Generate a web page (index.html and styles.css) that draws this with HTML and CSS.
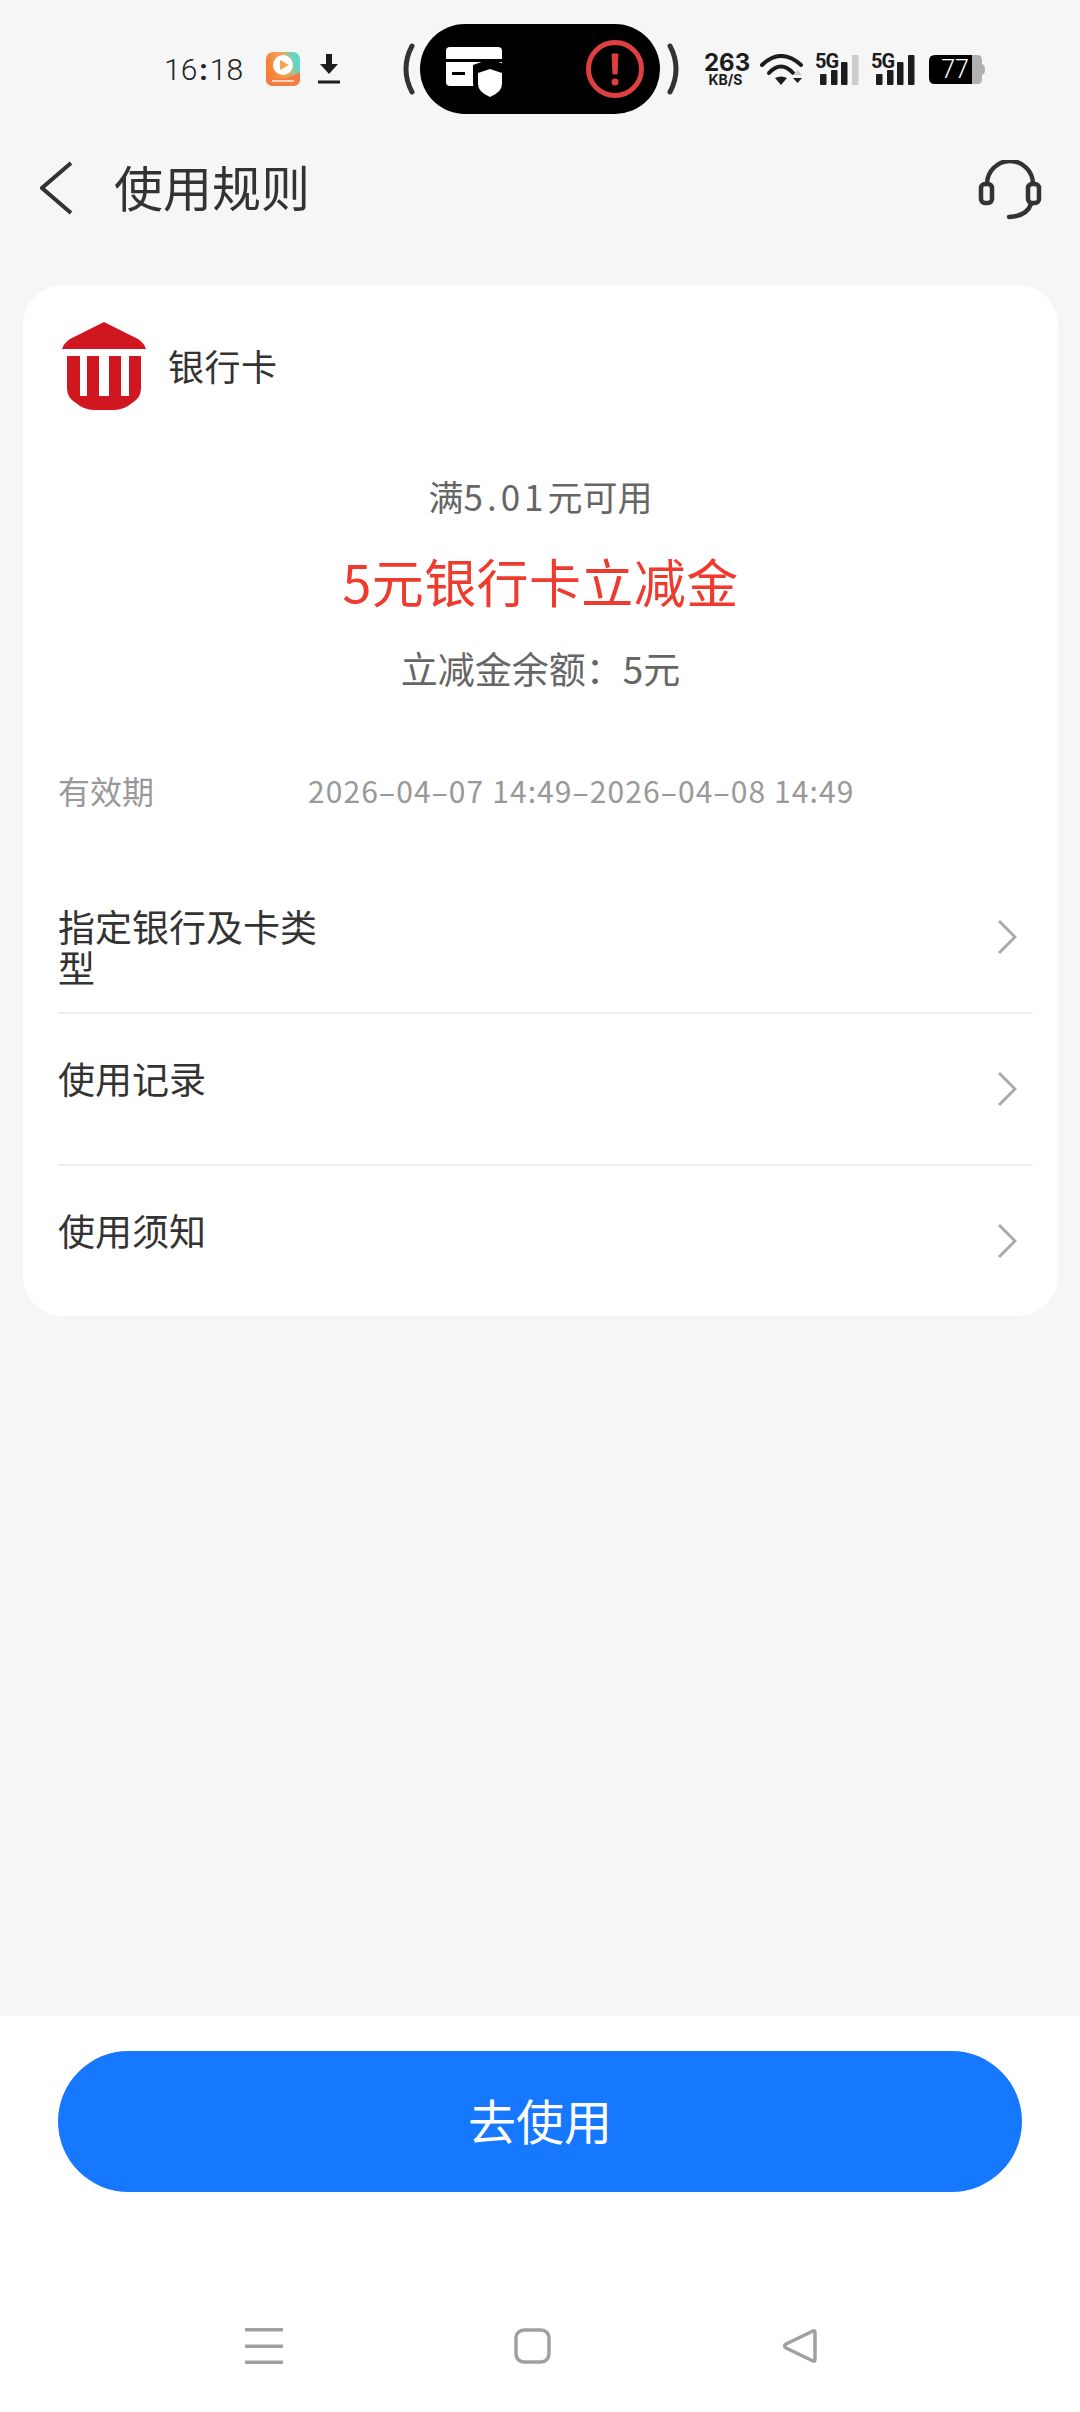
FILE: index.html
```html
<!DOCTYPE html>
<html lang="zh-CN">
<head>
  <meta charset="UTF-8" />
  <meta name="viewport" content="width=device-width, initial-scale=1.0"/>
  <title>使用规则</title>
  <link rel="stylesheet" href="styles.css">
</head>
<body>
<div class="page">

  <!-- status bar -->
  <div class="status-bar">
    <span class="time">16<span class="colon">:</span>18</span>
    <svg class="app-icon" width="34" height="34" viewBox="0 0 34 34">
      <defs>
        <linearGradient id="appBg" x1="0" y1="0.3" x2="1" y2="0">
          <stop offset="0" stop-color="#f58232"/>
          <stop offset="0.5" stop-color="#f3a45e"/>
          <stop offset="0.8" stop-color="#5dd8c4"/>
          <stop offset="1" stop-color="#5dd8c4"/>
        </linearGradient>
      </defs>
      <rect width="34" height="34" rx="7" fill="url(#appBg)"/>
      <path d="M0 25Q17 30 34 20V27Q34 34 27 34H7Q0 34 0 27Z" fill="#f47c45"/>
      <circle cx="17" cy="13" r="10" fill="#fff"/>
      <path d="M14 8L23 13L14 18Z" fill="#f6a54e"/>
      <rect x="6" y="28" width="22" height="2" fill="#fbd3b5"/>
    </svg>
    <svg class="dl-icon" width="22" height="30" viewBox="0 0 22 30">
      <path d="M8 0H14V10H20L11 20L2 10H8Z" fill="#1c1c1c"/>
      <rect y="26.500" width="22" height="3" fill="#1c1c1c"/>
    </svg>
    <svg class="paren-left" width="12" height="52" viewBox="0 0 12 52">
      <path d="M9 3Q3 14 3 26Q3 38 9 49" fill="none" stroke="#333" stroke-width="5" stroke-linecap="round"/>
    </svg>
    <div class="island">
      <svg width="56" height="56" viewBox="0 0 56 56">
        <rect y="6" width="56" height="39" rx="4" fill="#fff"/>
        <rect y="18" width="56" height="3" fill="#000"/>
        <rect x="6" y="31" width="13" height="3" fill="#000"/>
        <path d="M44 18L61 24V42Q61 55 44 62Q27 55 27 42V24Z" fill="#000"/>
        <path d="M44 28L56 32V43Q56 51 44 56Q32 51 32 43V32Z" fill="#fff"/>
      </svg>
      <svg width="58" height="58" viewBox="0 0 58 58">
        <circle cx="29" cy="29" r="26.500" fill="none" stroke="#de3f3f" stroke-width="5"/>
        <path d="M26 14H32L31 34H27Z" fill="#de3f3f" stroke="#de3f3f" stroke-width="1" stroke-linejoin="round"/>
        <circle cx="29" cy="42" r="3.500" fill="#de3f3f"/>
      </svg>
    </div>
    <svg class="paren-right" width="12" height="52" viewBox="0 0 12 52">
      <path d="M3 3Q9 14 9 26Q9 38 3 49" fill="none" stroke="#333" stroke-width="5" stroke-linecap="round"/>
    </svg>
    <div class="speed">
      <div class="speed-num">263</div>
      <div class="speed-unit">KB/S</div>
    </div>
    <svg class="wifi" width="43" height="31" viewBox="0 0 43 31">
      <path d="M2 11Q21 -7 41 11" fill="none" stroke="#1c1c1c" stroke-width="4" stroke-linecap="round"/>
      <path d="M9 19Q21 6 33 19" fill="none" stroke="#1c1c1c" stroke-width="4" stroke-linecap="round"/>
      <path d="M15 24L21 31L27 24Q21 21 15 24Z" fill="#1c1c1c"/>
      <path d="M33 21H42L37.500 16Z" fill="#ccc"/>
      <path d="M33 24H42L37.500 29Z" fill="#1c1c1c"/>
    </svg>
    <svg class="signal signal-a" width="45" height="31" viewBox="0 0 45 31">
      <text x="0" y="14" class="sig-text">5G</text>
      <rect x="5" y="20" width="6.500" height="11" rx="1" fill="#1c1c1c"/>
      <rect x="16" y="16" width="6.500" height="15" rx="1" fill="#1c1c1c"/>
      <rect x="26" y="8" width="6.500" height="23" rx="1" fill="#1c1c1c"/>
      <rect x="37" y="1" width="6.500" height="30" rx="1" fill="#ccc"/>
    </svg>
    <svg class="signal signal-b" width="45" height="31" viewBox="0 0 45 31">
      <text x="0" y="14" class="sig-text">5G</text>
      <rect x="5" y="20" width="6.500" height="11" rx="1" fill="#1c1c1c"/>
      <rect x="16" y="16" width="6.500" height="15" rx="1" fill="#1c1c1c"/>
      <rect x="26" y="8" width="6.500" height="23" rx="1" fill="#1c1c1c"/>
      <rect x="37" y="1" width="6.500" height="30" rx="1" fill="#1c1c1c"/>
    </svg>
    <svg class="battery" width="56" height="29" viewBox="0 0 56 29">
      <path d="M43 0H49Q53 0 53 6V9Q56 10 56 14.500Q56 19 53 20V23Q53 29 49 29H43Z" fill="#b0b0b0"/>
      <path d="M6 0H43V29H6Q0 29 0 23V6Q0 0 6 0Z" fill="#000"/>
      <text x="26" y="23" text-anchor="middle" class="bat-text">77</text>
    </svg>
  </div>

  <!-- title bar -->
  <div class="nav-bar">
    <svg class="back" width="34" height="54" viewBox="0 0 34 54">
      <path d="M31 2L2 27L31 52" fill="none" stroke="#333" stroke-width="4"/>
    </svg>
    <h1 class="nav-title">使用规则</h1>
    <svg class="headset" width="64" height="62" viewBox="0 0 64 62">
      <path d="M9 25V24A23 23 0 0 1 55 24V25" fill="none" stroke="#333" stroke-width="4.500"/>
      <rect x="3" y="24" width="11" height="19" rx="4" fill="none" stroke="#333" stroke-width="4.500"/>
      <rect x="50" y="24" width="11" height="19" rx="4" fill="none" stroke="#333" stroke-width="4.500"/>
      <path d="M53 44Q49 56 31 57" fill="none" stroke="#333" stroke-width="4.500" stroke-linecap="round"/>
    </svg>
  </div>

  <div class="content">
    <div class="card">
      <div class="card-head">
        <svg width="84" height="88" viewBox="0 0 84 88">
          <path d="M42 0L76 17Q82 21 84 27H0Q2 21 8 17Z" fill="#d0161f"/>
          <path d="M5 34H79V66Q79 76 70 81Q62 88 52 88H32Q22 88 14 81Q5 76 5 66Z" fill="#d0161f"/>
          <rect x="18" y="34" width="7" height="40" fill="#fff"/>
          <rect x="37" y="34" width="10" height="40" fill="#fff"/>
          <rect x="59" y="34" width="8" height="40" fill="#fff"/>
        </svg>
        <span class="card-name">银行卡</span>
      </div>

      <div class="limit">满<span class="limit-num">5.01</span>元可用</div>
      <div class="amount">5元银行卡立减金</div>
      <div class="balance">立减金余额：5元</div>

      <div class="validity">
        <span class="validity-label">有效期</span>
        <span class="validity-date">2026–04–07 14:49–2026–04–08 14:49</span>
      </div>

      <div class="row">
        <div class="row-text">指定银行及卡类型</div>
        <svg class="chevron" width="20" height="34" viewBox="0 0 20 34">
          <path d="M2 1L18 17L2 33" fill="none" stroke="#aaa" stroke-width="3"/>
        </svg>
      </div>
      <div class="row">
        <div class="row-text">使用记录</div>
        <svg class="chevron" width="20" height="34" viewBox="0 0 20 34">
          <path d="M2 1L18 17L2 33" fill="none" stroke="#aaa" stroke-width="3"/>
        </svg>
      </div>
      <div class="row row-last">
        <div class="row-text">使用须知</div>
        <svg class="chevron" width="20" height="34" viewBox="0 0 20 34">
          <path d="M2 1L18 17L2 33" fill="none" stroke="#aaa" stroke-width="3"/>
        </svg>
      </div>
    </div>
  </div>

  <div class="footer">
    <button class="use-btn">去使用</button>
    <div class="soft-keys">
      <svg width="38" height="36" viewBox="0 0 38 36">
        <rect y="0" width="38" height="3.500" fill="#a0a0a0"/>
        <rect y="16.500" width="38" height="3.500" fill="#a0a0a0"/>
        <rect y="32.500" width="38" height="3.500" fill="#a0a0a0"/>
      </svg>
      <svg width="37" height="36" viewBox="0 0 37 36">
        <rect x="2" y="2" width="33" height="32" rx="8" fill="none" stroke="#a0a0a0" stroke-width="3.500"/>
      </svg>
      <svg width="35" height="36" viewBox="0 0 35 36">
        <path d="M31 3Q33 2 33 5V31Q33 34 31 33L4 20Q1 18 4 16Z" fill="none" stroke="#a0a0a0" stroke-width="3.500" stroke-linejoin="round"/>
      </svg>
    </div>
  </div>

</div>
</body>
</html>
```

FILE: styles.css
```css
* {
  box-sizing: border-box;
}

body {
  margin: 0;
  padding: 0;
  background: #f6f6f6;
  color: #333;
  font-family: "Noto Sans CJK SC", "Noto Sans", sans-serif;
}

.page {
  width: 1080px;
  height: 2412px;
  display: flex;
  flex-direction: column;
  overflow: hidden;
}

/* status bar */
.status-bar {
  height: 138px;
  padding-left: 164px;
  display: flex;
  align-items: center;
  flex-shrink: 0;
}

.status-bar svg {
  flex-shrink: 0;
  display: block;
}

.time {
  width: 80px;
  font-family: Roboto, sans-serif;
  font-weight: 300;
  font-size: 30px;
  color: #222;
  white-space: nowrap;
}

.colon {
  margin: 0 2px;
  font-weight: 700;
}

.app-icon { margin-left: 22px; }
.dl-icon { margin-left: 18px; }
.paren-left { margin-left: 63px; }
.paren-right { margin-left: 7px; }
.wifi { margin-left: 13px; }
.signal-a { margin-left: 12px; }
.signal-b { margin-left: 11px; }
.battery { margin-left: 13px; }

.status-bar .signal {
  overflow: visible;
}

.island {
  width: 240px;
  height: 90px;
  margin-left: 5px;
  padding: 0 16px 0 26px;
  border-radius: 45px;
  background: #000;
  display: flex;
  align-items: center;
  justify-content: space-between;
}

.speed {
  width: 43px;
  margin-left: 25px;
  font-family: Inter, sans-serif;
  font-weight: 700;
  color: #1c1c1c;
  text-align: center;
}

.speed-num {
  font-size: 24px;
  line-height: 20px;
  white-space: nowrap;
}

.speed-unit {
  font-size: 14px;
  line-height: 13px;
  white-space: nowrap;
}

.sig-text {
  font-family: Roboto, sans-serif;
  font-weight: 700;
  font-size: 20px;
  letter-spacing: -1px;
  fill: #1c1c1c;
}

.bat-text {
  font-family: Roboto, sans-serif;
  font-weight: 300;
  font-size: 25px;
  fill: #fff;
}

/* title bar */
.nav-bar {
  height: 100px;
  padding: 0 38px 0 40px;
  display: flex;
  align-items: center;
  flex-shrink: 0;
}

.nav-title {
  margin: 0 0 0 40px;
  padding-bottom: 6px;
  flex: 1;
  font-size: 49px;
  font-weight: 400;
  color: #333;
}

.headset {
  margin-top: 6px;
}

/* card */
.content {
  flex: 1;
  padding: 47px 22px 0 23px;
}

.card {
  height: 1031px;
  padding: 37px 25px 0 35px;
  border-radius: 40px;
  background: #fff;
}

.card-head {
  height: 88px;
  padding-left: 4px;
  display: flex;
  align-items: center;
}

.card-name {
  margin-left: 22px;
  padding-bottom: 3px;
  font-size: 36px;
  letter-spacing: 0.5px;
  color: #333;
}

.limit,
.amount,
.balance {
  text-align: center;
  margin-right: 10px;
  white-space: nowrap;
}

.limit {
  margin-top: 61px;
  font-size: 35px;
  line-height: 50px;
  color: #666;
}

.limit-num {
  letter-spacing: 4px;
}

.amount {
  margin-top: 25px;
  font-size: 52px;
  letter-spacing: 0.4px;
  line-height: 70px;
  color: #ef3a2e;
}

.balance {
  margin-top: 27px;
  font-size: 37px;
  line-height: 50px;
  color: #666;
}

.validity {
  margin-top: 72px;
  height: 50px;
  display: flex;
  align-items: center;
  white-space: nowrap;
}

.validity-label {
  width: 250px;
  font-size: 32px;
  color: #999;
}

.validity-date {
  font-size: 30px;
  letter-spacing: 1.1px;
  color: #999;
}

.row {
  height: 152px;
  padding-right: 16px;
  border-bottom: 2px solid #eee;
  display: flex;
  align-items: center;
  justify-content: space-between;
}

.validity + .row {
  margin-top: 47px;
}

.row-last {
  height: 150px;
  border-bottom: none;
}

.row-text {
  width: 270px;
  align-self: flex-start;
  padding-top: 44px;
  font-size: 37px;
  line-height: 41px;
  color: #333;
}

/* bottom */
.footer {
  height: 396px;
  padding-top: 35px;
  background: #fff;
  display: flex;
  flex-direction: column;
  flex-shrink: 0;
}

.use-btn {
  width: 964px;
  height: 141px;
  margin-left: 58px;
  padding-bottom: 6px;
  border: none;
  border-radius: 71px;
  background: #1677ff;
  color: #fff;
  font-family: inherit;
  font-size: 48px;
}

.soft-keys {
  margin-top: auto;
  padding: 0 0 48px 245px;
  display: flex;
  gap: 231px;
}

.soft-keys svg {
  display: block;
}
```
